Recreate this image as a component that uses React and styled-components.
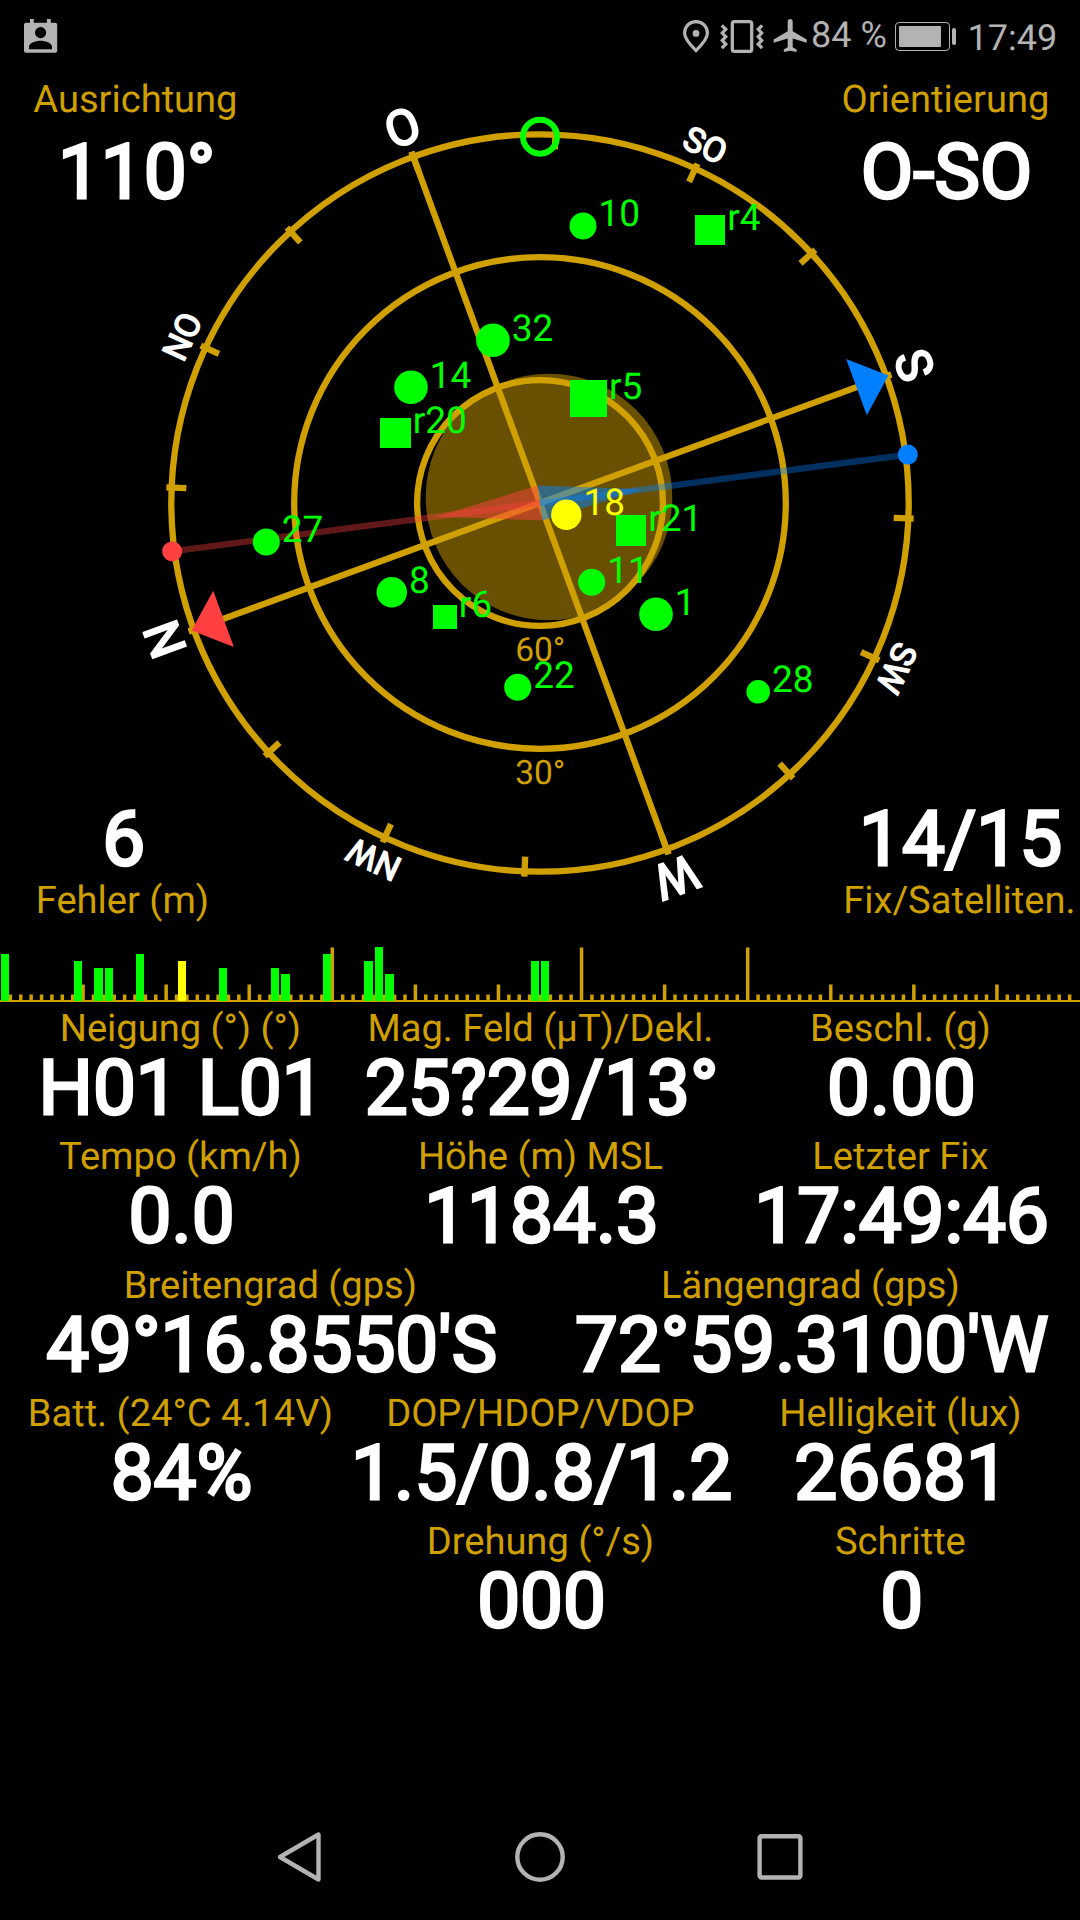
import React from "react";
import styled, { createGlobalStyle } from "styled-components";

const GOLD = "#d0a000";
const GREEN = "#00ff00";
const YELLOW = "#ffff00";
const RED = "#ff4040";
const BLUE = "#0080ff";
const GREY = "#b3b3b3";

const HEADING = 110.1;
const CX = 540;
const CY = 431;
const RADIUS = 368.7;
const SLOT = 1080 / 104;

// signal level -> marker radius on the sky view and bar height in the spectrum
const MARKER = { 1: 11.8, 2: 13.5, 3: 15.2, 4: 16.8, 5: 18.5 };
const BAR = { 1: 27, 2: 33, 3: 40, 4: 47, 5: 54 };

const satellites = [
    { name: "10", slot: 10, x: 583, y: 154, level: 2 },
    { name: "r4", slot: 36, x: 710, y: 158, level: 3 },
    { name: "32", slot: 32, x: 493, y: 268.3, level: 4 },
    { name: "14", slot: 14, x: 411, y: 315.3, level: 4 },
    { name: "r5", slot: 37, x: 588.5, y: 326.5, level: 5 },
    { name: "r20", slot: 52, x: 395.5, y: 361, level: 3 },
    { name: "27", slot: 27, x: 266.3, y: 470, level: 2 },
    { name: "18", slot: 18, x: 566.3, y: 442.7, level: 3, unused: true },
    { name: "r21", slot: 53, x: 631, y: 458.5, level: 3 },
    { name: "8", slot: 8, x: 391.8, y: 520.3, level: 3 },
    { name: "r6", slot: 38, x: 445, y: 545, level: 1 },
    { name: "11", slot: 11, x: 591.7, y: 510.3, level: 2 },
    { name: "1", slot: 1, x: 656, y: 542.3, level: 4 },
    { name: "22", slot: 22, x: 517.7, y: 615.3, level: 2 },
    { name: "28", slot: 28, x: 758.2, y: 619.8, level: 1 },
];

const directions = ["N", "NO", "O", "SO", "S", "SW", "W", "NW"];

const rows = [
    [
        { label: "Neigung (°) (°)", value: "H01 L01" },
        { label: "Mag. Feld (µT)/Dekl.", value: "25?29/13°" },
        { label: "Beschl. (g)", value: "0.00" },
    ],
    [
        { label: "Tempo (km/h)", value: "0.0" },
        { label: "Höhe (m) MSL", value: "1184.3" },
        { label: "Letzter Fix", value: "17:49:46" },
    ],
    [
        { label: "Breitengrad (gps)", value: "49°16.8550'S" },
        { label: "Längengrad (gps)", value: "72°59.3100'W" },
    ],
    [
        { label: "Batt. (24°C 4.14V)", value: "84%" },
        { label: "DOP/HDOP/VDOP", value: "1.5/0.8/1.2" },
        { label: "Helligkeit (lux)", value: "26681" },
    ],
    [
        { label: "", value: "" },
        { label: "Drehung (°/s)", value: "000" },
        { label: "Schritte", value: "0" },
    ],
];

function Satellite({ sat }) {
    const r = MARKER[sat.level];
    const color = sat.unused ? YELLOW : GREEN;
    return (
        <g fill={color}>
            {
                sat.name.startsWith("r")
                    ? <rect x={sat.x - r} y={sat.y - r} width={2 * r} height={2 * r} shapeRendering="crispEdges" />
                    : <circle cx={sat.x} cy={sat.y} r={r} />
            }
            <SatLabel x={sat.x + r + 2} y={sat.y + 0.2}>{sat.name}</SatLabel>
        </g>
    )
}

function SkyView() {
    return (
        <Sky viewBox="0 0 1080 858">
            <circle cx="549" cy="425" r="123.3" fill={GOLD} opacity="0.5" />
            <g transform={`translate(${CX} ${CY})`}>
                <g fill="none" stroke={GOLD} strokeWidth="6.3">
                    <circle r={RADIUS} />
                    <circle r={RADIUS * 2 / 3} />
                    <circle r={RADIUS / 3} />
                    <g transform={`rotate(${-HEADING})`}>
                        <line y1="-374" y2="374" />
                        <line x1="-374" x2="374" />
                        {
                            [...Array(16).keys()].map((i) => (
                                <line key={i} y1="-374" y2="-354" transform={`rotate(${i * 22.5})`} />
                            ))
                        }
                    </g>
                </g>
                <g transform="translate(-0.5 -0.8)">
                    {
                        directions.map((name, i) => (
                            <Direction
                                key={name}
                                $minor={name.length > 1}
                                y="-381.8"
                                transform={`rotate(${i * 45 - HEADING})`}
                            >
                                {name}
                            </Direction>
                        ))
                    }
                </g>
                <polygon points="0,-371 -30,-337 30,-337" fill={RED} transform={`rotate(${-HEADING})`} />
                <polygon points="0,-371 -30,-337 30,-337" fill={BLUE} transform={`rotate(${180 - HEADING})`} />
                <g transform="rotate(-7.5)">
                    <line x2="-371" stroke={RED} strokeWidth="6.3" opacity="0.375" />
                    <polygon points="0,-17.7 0,17.7 -104.6,0" fill={RED} opacity="0.5" />
                    <line x2="371" stroke={BLUE} strokeWidth="6.3" opacity="0.375" />
                    <polygon points="0,-17.7 0,17.7 104.6,0" fill={BLUE} opacity="0.5" />
                    <circle cx="-371" r="10" fill={RED} />
                    <circle cx="371" r="10" fill={BLUE} />
                </g>
                <Elevation x="0.3" y="157.5">60°</Elevation>
                <Elevation x="0.3" y="281">30°</Elevation>
                <circle cy="-366.3" r="17" fill="none" stroke={GREEN} strokeWidth="6" />
            </g>
            {satellites.map((sat) => <Satellite key={sat.name} sat={sat} />)}
        </Sky>
    )
}

function Spectrum() {
    const tickHeight = (i) => {
        if([32, 56, 72].includes(i)) return 53.5;
        return i % 8 === 0 ? 16.5 : 6.5;
    }

    return (
        <Bars viewBox="0 0 1080 76">
            <g fill={GOLD}>
                <rect y="70" width="1080" height="2" />
                {
                    [...Array(103).keys()].map((i) => (
                        <rect
                            key={i}
                            x={(i + 1) * SLOT - 1.75}
                            y={71 - tickHeight(i + 1)}
                            width="3.5"
                            height={tickHeight(i + 1)}
                        />
                    ))
                }
            </g>
            {
                satellites.map((sat) => (
                    <rect
                        key={sat.name}
                        x={sat.slot * SLOT - 9.4}
                        y={71 - BAR[sat.level]}
                        width="8.31"
                        height={BAR[sat.level]}
                        fill={sat.unused ? YELLOW : GREEN}
                        shapeRendering="crispEdges"
                    />
                ))
            }
        </Bars>
    )
}

function StatusIcons() {
    return (
        <Glyphs width="128" height="36" viewBox="682 18 128 36">
            <path
                d="M696 21.7c-6.4 0-11.4 5-11.4 11.2 0 5.6 4.6 11 11.4 17.6 6.8-6.6 11.4-12 11.4-17.6 0-6.2-5-11.2-11.4-11.2z"
                fill="none"
                stroke={GREY}
                strokeWidth="3.2"
            />
            <circle cx="696" cy="33.4" r="3.4" fill={GREY} />
            <rect x="732.3" y="21.6" width="19.4" height="29.8" rx="2.2" fill="none" stroke={GREY} strokeWidth="3.3" />
            <path
                d="M721.8 25.3l4 4-3.5 3.7 3.5 3.7-3.5 3.7 3.5 3.7-4 4M762.2 25.3l-4 4 3.5 3.7-3.5 3.7 3.5 3.7-3.5 3.7 4 4"
                fill="none"
                stroke={GREY}
                strokeWidth="3.2"
            />
            <path
                d="M790.2 19c-1.5 0-2.5 1.2-2.5 2.6v9.6l-14 8.3v3.3l14-4.2v8.6l-3.9 2.3v2.6l6.4-1.4 6.4 1.4v-2.6l-3.9-2.3v-8.6l14 4.2v-3.3l-14-8.3v-9.6c0-1.4-1-2.6-2.5-2.6z"
                fill={GREY}
            />
        </Glyphs>
    )
}

export default function App() {
    return (
        <Screen>
            <GlobalStyle />
            <StatusBar>
                <Glyphs width="34" height="36" viewBox="24 18 34 36">
                    <path
                        fillRule="evenodd"
                        d="M30 19h3.8v3.7h13.2v-3.7h3.8v3.7h4.4a2 2 0 0 1 2 2v26a2 2 0 0 1-2 2h-29.2a2 2 0 0 1-2-2v-26a2 2 0 0 1 2-2h4zM40.6 27a5.5 5.5 0 1 0 0 11.2a5.5 5.5 0 1 0 0-11.2zM29 49.3h23v-2.6c0-4-7.3-6-11.5-6s-11.5 2-11.5 6z"
                        fill={GREY}
                    />
                </Glyphs>
                <StatusGroup>
                    <StatusIcons />
                    <StatusText $width={85}>84 %</StatusText>
                    <Battery>
                        <BatteryCell><span /></BatteryCell>
                        <BatteryTip />
                    </Battery>
                    <StatusText $low $width={88}>17:49</StatusText>
                </StatusGroup>
            </StatusBar>
            <Panel>
                <SkyView />
                <Corner $width={270} $area="start">
                    <Label>Ausrichtung</Label>
                    <Value $gap>110°</Value>
                </Corner>
                <Corner $width={270} $area="start" $right>
                    <Label>Orientierung</Label>
                    <Value $gap>O-SO</Value>
                </Corner>
                <Corner $width={244} $area="end">
                    <Value>6</Value>
                    <Label>Fehler (m)</Label>
                </Corner>
                <Corner $width={242} $area="end" $right>
                    <Value>14/15</Value>
                    <Label>Fix/Satelliten.</Label>
                </Corner>
            </Panel>
            <Spectrum />
            <Readings>
                {
                    rows.map((cells, i) => (
                        <Row key={i}>
                            {
                                cells.map((cell, j) => (
                                    <Cell key={j}>
                                        <Label>{cell.label}</Label>
                                        <Value>{cell.value}</Value>
                                    </Cell>
                                ))
                            }
                        </Row>
                    ))
                }
            </Readings>
            <NavBar>
                <Glyphs width="50" height="54" viewBox="0 0 50 54">
                    <path
                        d="M5 27L43.5 4.5V49.5z"
                        fill="none"
                        stroke={GREY}
                        strokeWidth="4.4"
                        strokeLinejoin="round"
                    />
                </Glyphs>
                <Glyphs width="50" height="54" viewBox="0 0 50 54">
                    <circle cx="25" cy="27" r="22.7" fill="none" stroke={GREY} strokeWidth="4.4" />
                </Glyphs>
                <Glyphs width="50" height="54" viewBox="0 0 50 54">
                    <rect x="4.6" y="6.2" width="40.8" height="41.3" rx="2" fill="none" stroke={GREY} strokeWidth="4.4" />
                </Glyphs>
            </NavBar>
        </Screen>
    )
}

const GlobalStyle = createGlobalStyle`
    * {
        box-sizing: border-box;
    }
    body {
        margin: 0;
        background-color: black;
        font-family: Roboto, "Liberation Sans", sans-serif;
        text-rendering: geometricPrecision;
    }
`;

const Screen = styled.div`
    width: 1080px;
    height: 1920px;
    display: flex;
    flex-direction: column;
    background-color: black;
    overflow: hidden;
`;

const StatusBar = styled.div`
    height: 72px;
    padding: 0 24.5px 0 24px;
    display: flex;
    justify-content: space-between;
    align-items: center;
`;

const StatusGroup = styled.div`
    display: flex;
    align-items: center;
`;

const Glyphs = styled.svg`
    display: block;
    flex: none;
`;

const StatusText = styled.span`
    width: ${({ $width }) => $width}px;
    margin-top: ${({ $low }) => $low ? "3px" : "-3px"};
    padding-left: ${({ $low }) => $low ? 0 : 1}px;
    font-size: 36px;
    line-height: 42px;
    color: ${GREY};
    white-space: nowrap;
`;

const Battery = styled.div`
    width: 72.5px;
    display: flex;
    align-items: center;
    gap: 2px;
`;

const BatteryCell = styled.div`
    width: 55px;
    height: 29px;
    padding: 3px;
    border: 1.5px solid ${GREY};
    border-radius: 4px;
    span {
        display: block;
        width: 42px;
        height: 21px;
        border-radius: 1px;
        background-color: ${GREY};
    }
`;

const BatteryTip = styled.div`
    width: 4px;
    height: 17px;
    border-radius: 2px;
    background-color: ${GREY};
`;

const Panel = styled.div`
    height: 858px;
    display: grid;
    grid-template: 100% / 100%;
    > * {
        grid-area: 1 / 1;
    }
`;

const Sky = styled.svg`
    display: block;
    width: 1080px;
    height: 858px;
`;

const SatLabel = styled.text`
    font-size: 37px;
`;

const Direction = styled.text`
    font-size: ${({ $minor }) => $minor ? 34 : 49}px;
    text-anchor: middle;
    fill: white;
    stroke: white;
    stroke-width: ${({ $minor }) => $minor ? 1.5 : 2.1}px;
`;

const Elevation = styled.text`
    font-size: 33.5px;
    text-anchor: middle;
    fill: ${GOLD};
`;

const Corner = styled.div`
    width: ${({ $width }) => $width}px;
    padding: 5px 0 6px;
    display: flex;
    flex-direction: column;
    align-items: center;
    align-self: ${({ $area }) => $area};
    justify-self: ${({ $right }) => $right ? "end" : "start"};
`;

const Label = styled.div`
    height: 46px;
    padding-left: 0.8px;
    font-size: 38.1px;
    line-height: 47px;
    color: ${GOLD};
    white-space: nowrap;
`;

const Value = styled.div`
    height: 75px;
    margin-top: ${({ $gap }) => $gap ? 13 : 0}px;
    padding-left: 3.2px;
    font-size: 76.4px;
    line-height: 73.5px;
    color: white;
    white-space: nowrap;
    -webkit-text-stroke: 2.9px white;
`;

const Bars = styled.svg`
    display: block;
    width: 1080px;
    height: 76px;
`;

const Readings = styled.div`
    display: flex;
    flex-direction: column;
`;

const Row = styled.div`
    height: 128.33px;
    display: flex;
`;

const Cell = styled.div`
    flex: 1 1 0;
    min-width: 0;
    display: flex;
    flex-direction: column;
    align-items: center;
`;

const NavBar = styled.div`
    height: 126px;
    margin-top: auto;
    padding: 0 275px;
    display: flex;
    justify-content: space-between;
    align-items: center;
`;
